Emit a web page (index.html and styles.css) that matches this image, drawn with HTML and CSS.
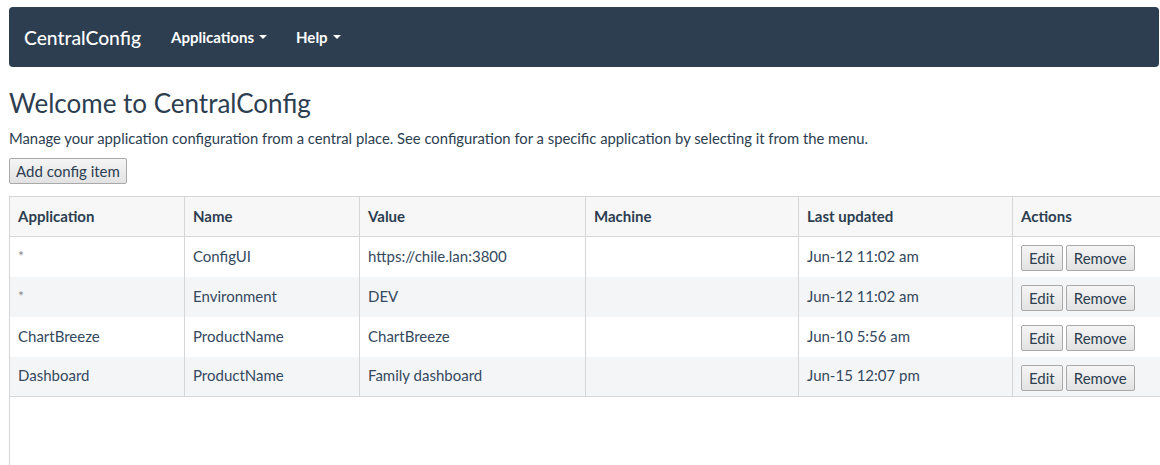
FILE: index.html
```html
<!DOCTYPE html>
<html>
<head>
<meta charset="utf-8">
<title>CentralConfig</title>
<link rel="stylesheet" href="styles.css">
</head>
<body>
<div class="page">
  <nav class="navbar">
    <span class="brand">CentralConfig</span>
    <span class="nav-item">Applications <span class="caret"></span></span>
    <span class="nav-item">Help <span class="caret"></span></span>
  </nav>
  <h1 class="title">Welcome to CentralConfig</h1>
  <p class="lead">Manage your application configuration from a central place. See configuration for a specific application by selecting it from the menu.</p>
  <button class="btn btn-add">Add config item</button>
  <div class="grid-wrap">
    <table class="grid">
      <colgroup>
        <col class="c1"><col class="c2"><col class="c3"><col class="c4"><col class="c5"><col class="c6">
      </colgroup>
      <thead>
        <tr><th>Application</th><th>Name</th><th>Value</th><th>Machine</th><th>Last updated</th><th>Actions</th></tr>
      </thead>
      <tbody>
        <tr><td class="star">*</td><td>ConfigUI</td><td>https://chile.lan:3800</td><td></td><td>Jun-12 11:02 am</td><td class="actions"><button class="btn">Edit</button><button class="btn">Remove</button></td></tr>
        <tr class="alt"><td class="star">*</td><td>Environment</td><td>DEV</td><td></td><td>Jun-12 11:02 am</td><td class="actions"><button class="btn">Edit</button><button class="btn">Remove</button></td></tr>
        <tr><td>ChartBreeze</td><td>ProductName</td><td>ChartBreeze</td><td></td><td>Jun-10 5:56 am</td><td class="actions"><button class="btn">Edit</button><button class="btn">Remove</button></td></tr>
        <tr class="alt"><td>Dashboard</td><td>ProductName</td><td>Family dashboard</td><td></td><td>Jun-15 12:07 pm</td><td class="actions"><button class="btn">Edit</button><button class="btn">Remove</button></td></tr>
      </tbody>
    </table>
  </div>
</div>
</body>
</html>
```
FILE: styles.css
```css
html, body {
  margin: 0;
  padding: 0;
  overflow: hidden;
  background: #fff;
}
body {
  font-family: Lato, "Open Sans", sans-serif;
  font-size: 15px;
  color: #2c3e50;
}
.page {
  padding: 7px 0 0 9px;
  width: 1151px;
}
.navbar {
  display: flex;
  align-items: center;
  height: 60px;
  width: 1150px;
  background: #2c3e50;
  border-radius: 4px;
  padding-left: 15px;
  box-sizing: border-box;
}
.brand {
  color: #fff;
  font-size: 19.3px;
  font-weight: 500;
  margin-right: 30px;
}
.nav-item {
  color: #fff;
  font-size: 15px;
  font-weight: 700;
  margin-right: 29px;
  display: inline-flex;
  align-items: center;
}
.caret {
  display: inline-block;
  width: 0;
  height: 0;
  margin-left: 5px;
  border-left: 4px solid transparent;
  border-right: 4px solid transparent;
  border-top: 4px solid #fff;
}
.title {
  font-size: 26px;
  font-weight: 400;
  margin: 21px 0 0;
  line-height: 30px;
  color: #2c3e50;
}
.lead {
  margin: 10px 0 0;
  line-height: 20px;
  font-size: 14.8px;
  color: #2c3e50;
}
.btn {
  font-family: Lato, "Open Sans", sans-serif;
  font-size: 15px;
  color: #2c3e50;
  background: linear-gradient(#f5f5f5, #e2e2e2);
  border: 1px solid #a9a9a9;
  border-radius: 2px;
  padding: 0 6px;
  height: 26px;
  line-height: 24px;
  cursor: pointer;
}
.btn-add {
  margin-top: 10px;
  display: block;
}
.grid-wrap {
  margin-top: 12px;
  border-left: 1px solid #d6d6d6;
  height: 269px;
}
.grid {
  border-collapse: collapse;
  table-layout: fixed;
  width: 1200px;
  margin-left: -1px;
}
.c1 { width: 175px; }
.c2 { width: 175px; }
.c3 { width: 226px; }
.c4 { width: 213px; }
.c5 { width: 214px; }
.c6 { width: 197px; }
.grid th, .grid td {
  border: 1px solid #d6d6d6;
  height: 40px;
  padding: 0 8px 2px;
  text-align: left;
  box-sizing: border-box;
  vertical-align: middle;
  white-space: nowrap;
}
.grid th {
  background: #f7f7f8;
  font-weight: 700;
  color: #2c3e50;
}
.grid td {
  border-top: none;
  border-bottom: none;
  color: #34495e;
  background: #fff;
}
.grid tr.alt td {
  background: #f4f5f7;
}
.grid tbody tr:last-child td {
  border-bottom: 1px solid #d6d6d6;
}
.grid td.star {
  color: #888;
  font-size: 14px;
}
.grid td.actions {
  padding-top: 3px;
  padding-bottom: 0;
}
.actions .btn {
  margin-right: 3px;
  padding: 0 7px;
}
```
